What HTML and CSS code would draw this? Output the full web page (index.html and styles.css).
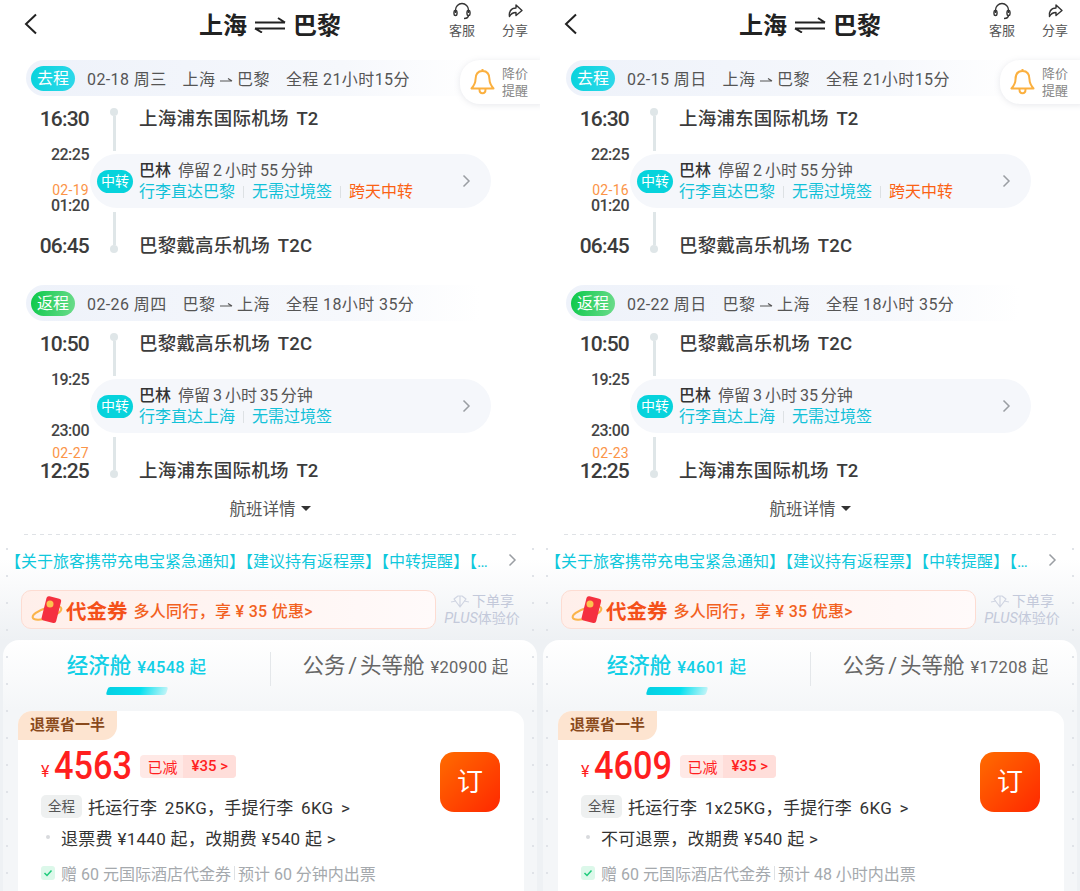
FILE: index.html
```html
<!DOCTYPE html>
<html lang="en">

<head>
    <title>上海 巴黎 机票</title>
    <link rel="stylesheet" href="styles.css">
</head>

<body>
<div class="page">

<!-- left phone -->
<section class="phone">
    <header class="topbar">
        <svg class="back" width="14" height="22" viewBox="0 0 14 22"><path d="M12 1.500 2 11l10 9.500" fill="none" stroke="#222" stroke-width="2"/></svg>
        <h1 class="title">上海
            <svg class="swap" width="32" height="16" viewBox="0 0 32 16"><path d="M1 5.500h30M31 5.500l-7-4.500M1 11.500h30M1 11.500l7 4" fill="none" stroke="#222" stroke-width="2"/></svg>
            巴黎</h1>
        <div class="actions">
            <div class="action">
                <svg width="20" height="20" viewBox="0 0 20 20"><path d="M3.500 11V8a6.500 6.500 0 0 1 13 0v3M16.500 13c0 2.500-2 3.500-4.500 3.500" fill="none" stroke="#333" stroke-width="1.400"/><rect x="2" y="8.500" width="3" height="5" rx="1.500" fill="none" stroke="#333" stroke-width="1.400"/><rect x="15" y="8.500" width="3" height="5" rx="1.500" fill="none" stroke="#333" stroke-width="1.400"/></svg>
                <span>客服</span>
            </div>
            <div class="action">
                <svg width="20" height="20" viewBox="0 0 20 20"><path d="M11 3l6 5.500-6 5v-3c-3 0-5 1-6.500 4-.8-4 1-8.500 6.500-8.500z" fill="none" stroke="#333" stroke-width="1.400" stroke-linejoin="round"/></svg>
                <span>分享</span>
            </div>
        </div>
    </header>

    <div class="alert">
        <svg width="27" height="28" viewBox="0 0 27 28"><path d="M13.500 3c-5 0-7 4-7 8.500 0 4-1.500 6-4 9h22c-2.500-3-4-5-4-9C20.500 7 18.500 3 13.500 3zM10.500 21.500c0 5 6 5 6 0M13.500 1v2" fill="none" stroke="#fbb03f" stroke-width="2" stroke-linejoin="round"/></svg>
        <span>降价<br>提醒</span>
    </div>

    <div class="leg">
        <div class="leg-bar">
            <span class="pill pill-out">去程</span>
            <span>02-18 周三</span>
            <span>上海 <svg class="mini-arrow" width="13" height="8" viewBox="0 0 13 8"><path d="M0 5h12M12 5L8 2.500" fill="none" stroke="#555" stroke-width="1.200"/></svg> 巴黎</span>
            <span>全程 21小时15分</span>
        </div>
        <div class="stop stop-start">
            <div class="time">16:30</div>
            <div class="rail"><i class="dot"></i><i class="line"></i></div>
            <div class="airport">上海浦东国际机场 T2</div>
        </div>
        <div class="transfer">
            <div class="transfer-times">
                <div>22:25</div>
                <div><div class="next-day">02-19</div>01:20</div>
            </div>
            <div class="transfer-box">
                <span class="transfer-tag">中转</span>
                <div class="transfer-info">
                    <div class="transfer-city"><b>巴林</b>停留 2 小时 55 分钟</div>
                    <div class="transfer-notes"><span>行李直达巴黎</span><i></i><span>无需过境签</span><i></i><span class="warn">跨天中转</span></div>
                </div>
                <svg class="chevron" width="9" height="14" viewBox="0 0 9 14"><path d="M1.500 1.500 7 7l-5.500 5.500" fill="none" stroke="#9a9ea3" stroke-width="1.500"/></svg>
            </div>
        </div>
        <div class="stop stop-end">
            <div class="time">06:45</div>
            <div class="rail"><i class="line"></i><i class="dot"></i></div>
            <div class="airport">巴黎戴高乐机场 T2C</div>
        </div>
    </div>

    <div class="leg">
        <div class="leg-bar">
            <span class="pill pill-back">返程</span>
            <span>02-26 周四</span>
            <span>巴黎 <svg class="mini-arrow" width="13" height="8" viewBox="0 0 13 8"><path d="M0 5h12M12 5L8 2.500" fill="none" stroke="#555" stroke-width="1.200"/></svg> 上海</span>
            <span>全程 18小时 35分</span>
        </div>
        <div class="stop stop-start">
            <div class="time">10:50</div>
            <div class="rail"><i class="dot"></i><i class="line"></i></div>
            <div class="airport">巴黎戴高乐机场 T2C</div>
        </div>
        <div class="transfer">
            <div class="transfer-times">
                <div>19:25</div>
                <div>23:00</div>
            </div>
            <div class="transfer-box">
                <span class="transfer-tag">中转</span>
                <div class="transfer-info">
                    <div class="transfer-city"><b>巴林</b>停留 3 小时 35 分钟</div>
                    <div class="transfer-notes"><span>行李直达上海</span><i></i><span>无需过境签</span></div>
                </div>
                <svg class="chevron" width="9" height="14" viewBox="0 0 9 14"><path d="M1.500 1.500 7 7l-5.500 5.500" fill="none" stroke="#9a9ea3" stroke-width="1.500"/></svg>
            </div>
        </div>
        <div class="stop stop-end">
            <div class="time"><div class="next-day">02-27</div>12:25</div>
            <div class="rail"><i class="line"></i><i class="dot"></i></div>
            <div class="airport">上海浦东国际机场 T2</div>
        </div>
    </div>

    <div class="details">航班详情<i class="caret"></i></div>

    <div class="lower">
        <div class="notice">
            <span class="notice-text">【关于旅客携带充电宝紧急通知】【建议持有返程票】【中转提醒】【…</span>
            <svg width="9" height="14" viewBox="0 0 9 14"><path d="M1.500 1.500 7 7l-5.500 5.500" fill="none" stroke="#9a9ea3" stroke-width="1.500"/></svg>
        </div>
        <div class="promo">
            <div class="voucher">
                <svg class="envelope" width="34" height="30" viewBox="0 0 34 30"><ellipse cx="16" cy="18" rx="15" ry="5" fill="none" stroke="#fbb44a" stroke-width="2" transform="rotate(-18 16 18)"/><rect x="13" y="2" width="15" height="25" rx="2.500" fill="#f5303f" transform="rotate(14 20 14)"/><circle cx="19" cy="9" r="3.500" fill="#fcc24f"/></svg>
                <strong>代金券</strong>
                <span>多人同行，享 ¥ 35 优惠&gt;</span>
            </div>
            <div class="plus">
                <div class="plus-top"><svg width="20" height="14" viewBox="0 0 20 14"><path d="M4 5l4-3h4l4 3-6 8zM1 8l5-1M19 8l-5-1M10 2v11" fill="none" stroke="#d0d5e2" stroke-width="1.200" stroke-linejoin="round"/></svg>下单享</div>
                <div><em>PLUS</em>体验价</div>
            </div>
        </div>

        <div class="cabin">
            <div class="tabs">
                <div class="tab tab-on"><span class="tab-name">经济舱</span><span class="tab-price">¥4548 起</span><i class="tab-bar"></i></div>
                <div class="tab"><span class="tab-name">公务 / 头等舱</span><span class="tab-price">¥20900 起</span></div>
            </div>
            <div class="fare">
                <div class="fare-tag">退票省一半</div>
                <div class="fare-body">
                    <div class="fare-main">
                        <div class="price-row">
                            <span class="yen">¥</span><span class="price">4563</span>
                            <span class="saved"><span>已减</span><b>¥35 &gt;</b></span>
                        </div>
                        <div class="fare-line"><span class="fare-chip">全程</span>托运行李 25KG，手提行李 6KG &gt;</div>
                        <div class="fare-line fare-refund"><i class="bullet"></i>退票费 ¥1440 起，改期费 ¥540 起 &gt;</div>
                    </div>
                    <div class="book">订</div>
                </div>
                <div class="fare-foot">
                    <svg width="14" height="14" viewBox="0 0 14 14"><rect width="14" height="14" rx="3" fill="#dcf8ea"/><path d="M3.500 7l2.500 2.500 4.500-5" fill="none" stroke="#1fca7c" stroke-width="1.500"/></svg>
                    <span>赠 60 元国际酒店代金券</span><i></i><span>预计 60 分钟内出票</span>
                </div>
            </div>
        </div>
    </div>
</section>

<!-- right phone -->
<section class="phone">
    <header class="topbar">
        <svg class="back" width="14" height="22" viewBox="0 0 14 22"><path d="M12 1.500 2 11l10 9.500" fill="none" stroke="#222" stroke-width="2"/></svg>
        <h1 class="title">上海
            <svg class="swap" width="32" height="16" viewBox="0 0 32 16"><path d="M1 5.500h30M31 5.500l-7-4.500M1 11.500h30M1 11.500l7 4" fill="none" stroke="#222" stroke-width="2"/></svg>
            巴黎</h1>
        <div class="actions">
            <div class="action">
                <svg width="20" height="20" viewBox="0 0 20 20"><path d="M3.500 11V8a6.500 6.500 0 0 1 13 0v3M16.500 13c0 2.500-2 3.500-4.500 3.500" fill="none" stroke="#333" stroke-width="1.400"/><rect x="2" y="8.500" width="3" height="5" rx="1.500" fill="none" stroke="#333" stroke-width="1.400"/><rect x="15" y="8.500" width="3" height="5" rx="1.500" fill="none" stroke="#333" stroke-width="1.400"/></svg>
                <span>客服</span>
            </div>
            <div class="action">
                <svg width="20" height="20" viewBox="0 0 20 20"><path d="M11 3l6 5.500-6 5v-3c-3 0-5 1-6.500 4-.8-4 1-8.500 6.500-8.500z" fill="none" stroke="#333" stroke-width="1.400" stroke-linejoin="round"/></svg>
                <span>分享</span>
            </div>
        </div>
    </header>

    <div class="alert">
        <svg width="27" height="28" viewBox="0 0 27 28"><path d="M13.500 3c-5 0-7 4-7 8.500 0 4-1.500 6-4 9h22c-2.500-3-4-5-4-9C20.500 7 18.500 3 13.500 3zM10.500 21.500c0 5 6 5 6 0M13.500 1v2" fill="none" stroke="#fbb03f" stroke-width="2" stroke-linejoin="round"/></svg>
        <span>降价<br>提醒</span>
    </div>

    <div class="leg">
        <div class="leg-bar">
            <span class="pill pill-out">去程</span>
            <span>02-15 周日</span>
            <span>上海 <svg class="mini-arrow" width="13" height="8" viewBox="0 0 13 8"><path d="M0 5h12M12 5L8 2.500" fill="none" stroke="#555" stroke-width="1.200"/></svg> 巴黎</span>
            <span>全程 21小时15分</span>
        </div>
        <div class="stop stop-start">
            <div class="time">16:30</div>
            <div class="rail"><i class="dot"></i><i class="line"></i></div>
            <div class="airport">上海浦东国际机场 T2</div>
        </div>
        <div class="transfer">
            <div class="transfer-times">
                <div>22:25</div>
                <div><div class="next-day">02-16</div>01:20</div>
            </div>
            <div class="transfer-box">
                <span class="transfer-tag">中转</span>
                <div class="transfer-info">
                    <div class="transfer-city"><b>巴林</b>停留 2 小时 55 分钟</div>
                    <div class="transfer-notes"><span>行李直达巴黎</span><i></i><span>无需过境签</span><i></i><span class="warn">跨天中转</span></div>
                </div>
                <svg class="chevron" width="9" height="14" viewBox="0 0 9 14"><path d="M1.500 1.500 7 7l-5.500 5.500" fill="none" stroke="#9a9ea3" stroke-width="1.500"/></svg>
            </div>
        </div>
        <div class="stop stop-end">
            <div class="time">06:45</div>
            <div class="rail"><i class="line"></i><i class="dot"></i></div>
            <div class="airport">巴黎戴高乐机场 T2C</div>
        </div>
    </div>

    <div class="leg">
        <div class="leg-bar">
            <span class="pill pill-back">返程</span>
            <span>02-22 周日</span>
            <span>巴黎 <svg class="mini-arrow" width="13" height="8" viewBox="0 0 13 8"><path d="M0 5h12M12 5L8 2.500" fill="none" stroke="#555" stroke-width="1.200"/></svg> 上海</span>
            <span>全程 18小时 35分</span>
        </div>
        <div class="stop stop-start">
            <div class="time">10:50</div>
            <div class="rail"><i class="dot"></i><i class="line"></i></div>
            <div class="airport">巴黎戴高乐机场 T2C</div>
        </div>
        <div class="transfer">
            <div class="transfer-times">
                <div>19:25</div>
                <div>23:00</div>
            </div>
            <div class="transfer-box">
                <span class="transfer-tag">中转</span>
                <div class="transfer-info">
                    <div class="transfer-city"><b>巴林</b>停留 3 小时 35 分钟</div>
                    <div class="transfer-notes"><span>行李直达上海</span><i></i><span>无需过境签</span></div>
                </div>
                <svg class="chevron" width="9" height="14" viewBox="0 0 9 14"><path d="M1.500 1.500 7 7l-5.500 5.500" fill="none" stroke="#9a9ea3" stroke-width="1.500"/></svg>
            </div>
        </div>
        <div class="stop stop-end">
            <div class="time"><div class="next-day">02-23</div>12:25</div>
            <div class="rail"><i class="line"></i><i class="dot"></i></div>
            <div class="airport">上海浦东国际机场 T2</div>
        </div>
    </div>

    <div class="details">航班详情<i class="caret"></i></div>

    <div class="lower">
        <div class="notice">
            <span class="notice-text">【关于旅客携带充电宝紧急通知】【建议持有返程票】【中转提醒】【…</span>
            <svg width="9" height="14" viewBox="0 0 9 14"><path d="M1.500 1.500 7 7l-5.500 5.500" fill="none" stroke="#9a9ea3" stroke-width="1.500"/></svg>
        </div>
        <div class="promo">
            <div class="voucher">
                <svg class="envelope" width="34" height="30" viewBox="0 0 34 30"><ellipse cx="16" cy="18" rx="15" ry="5" fill="none" stroke="#fbb44a" stroke-width="2" transform="rotate(-18 16 18)"/><rect x="13" y="2" width="15" height="25" rx="2.500" fill="#f5303f" transform="rotate(14 20 14)"/><circle cx="19" cy="9" r="3.500" fill="#fcc24f"/></svg>
                <strong>代金券</strong>
                <span>多人同行，享 ¥ 35 优惠&gt;</span>
            </div>
            <div class="plus">
                <div class="plus-top"><svg width="20" height="14" viewBox="0 0 20 14"><path d="M4 5l4-3h4l4 3-6 8zM1 8l5-1M19 8l-5-1M10 2v11" fill="none" stroke="#d0d5e2" stroke-width="1.200" stroke-linejoin="round"/></svg>下单享</div>
                <div><em>PLUS</em>体验价</div>
            </div>
        </div>

        <div class="cabin">
            <div class="tabs">
                <div class="tab tab-on"><span class="tab-name">经济舱</span><span class="tab-price">¥4601 起</span><i class="tab-bar"></i></div>
                <div class="tab"><span class="tab-name">公务 / 头等舱</span><span class="tab-price">¥17208 起</span></div>
            </div>
            <div class="fare">
                <div class="fare-tag">退票省一半</div>
                <div class="fare-body">
                    <div class="fare-main">
                        <div class="price-row">
                            <span class="yen">¥</span><span class="price">4609</span>
                            <span class="saved"><span>已减</span><b>¥35 &gt;</b></span>
                        </div>
                        <div class="fare-line"><span class="fare-chip">全程</span>托运行李 1x25KG，手提行李 6KG &gt;</div>
                        <div class="fare-line fare-refund"><i class="bullet"></i>不可退票，改期费 ¥540 起 &gt;</div>
                    </div>
                    <div class="book">订</div>
                </div>
                <div class="fare-foot">
                    <svg width="14" height="14" viewBox="0 0 14 14"><rect width="14" height="14" rx="3" fill="#dcf8ea"/><path d="M3.500 7l2.500 2.500 4.500-5" fill="none" stroke="#1fca7c" stroke-width="1.500"/></svg>
                    <span>赠 60 元国际酒店代金券</span><i></i><span>预计 48 小时内出票</span>
                </div>
            </div>
        </div>
    </div>
</section>

</div>
</body>

</html>
```

FILE: styles.css
```css
* {
    box-sizing: border-box;
}

html,
body {
    margin: 0;
    height: 891px;
    overflow: hidden;
    background: #fff;
}

body {
    font-family: "Roboto", "Noto Sans CJK SC", sans-serif;
    color: #333;
}

i {
    font-style: normal;
}

.page {
    display: flex;
}

.phone {
    position: relative;
    width: 540px;
    height: 891px;
    overflow: hidden;
    background: #fff;
}

/* faint ticks down both edges of the lower part */
.phone::after {
    content: "";
    position: absolute;
    inset: 548px 0 0 0;
    pointer-events: none;
    background:
        repeating-linear-gradient(180deg, #e0e3e8 0 2px, transparent 2px 27px) left 6px top / 2px 100% no-repeat,
        repeating-linear-gradient(180deg, #e0e3e8 0 2px, transparent 2px 27px) right 6px top / 2px 100% no-repeat;
}

/* top bar */
.topbar {
    position: relative;
    display: flex;
    align-items: center;
    justify-content: center;
    height: 60px;
    padding-bottom: 14px;
}

.back {
    position: absolute;
    left: 24px;
    top: 13px;
}

.title {
    display: flex;
    align-items: center;
    gap: 7px;
    margin: 0;
    font-size: 24px;
    font-weight: 700;
    color: #222;
}

.swap {
    margin-top: 4px;
}

.actions {
    position: absolute;
    right: 12px;
    top: 2px;
    display: flex;
    gap: 27px;
}

.action {
    display: flex;
    flex-direction: column;
    align-items: center;
    font-size: 13px;
    line-height: 18px;
    color: #555;
}

/* price alert */
.alert {
    position: absolute;
    left: 460px;
    top: 60px;
    display: flex;
    align-items: center;
    gap: 6px;
    width: 84px;
    height: 44px;
    padding-left: 9px;
    border-radius: 20px 0 0 20px;
    background: #fff;
    box-shadow: 0 1px 6px rgba(120, 130, 150, .18);
    font-size: 13px;
    line-height: 17px;
    color: #888;
}

/* legs */
.leg {
    margin-bottom: 25px;
}

.leg-bar {
    display: flex;
    align-items: center;
    gap: 16px;
    width: 454px;
    height: 36px;
    margin: 0 0 9px 26px;
    padding-left: 5px;
    border-radius: 18px 0 0 18px;
    background: linear-gradient(90deg, #eef2fa, #f6f8fc 70%, #fff);
    font-size: 16px;
    letter-spacing: .4px;
    color: #555;
}

.pill {
    width: 44px;
    height: 25px;
    margin-right: -4px;
    border-radius: 13px;
    font-size: 16px;
    letter-spacing: 0;
    line-height: 25px;
    text-align: center;
    color: #fff;
}

.pill-out {
    background: linear-gradient(100deg, #07d3dc, #2fd8ea);
}

.pill-back {
    background: linear-gradient(100deg, #0cc94a, #6ddc8c);
}

.mini-arrow {
    vertical-align: 1px;
}

.stop {
    display: flex;
}

.stop-start {
    height: 40px;
}

.stop-end {
    height: 45px;
}

.time {
    display: flex;
    flex-direction: column;
    justify-content: flex-end;
    align-items: flex-end;
    width: 89px;
    height: 28px;
    font-size: 21px;
    font-weight: 500;
    letter-spacing: -.8px;
    line-height: 28px;
    color: #3c3c3c;
}

.stop-end .time {
    height: 45px;
}

.stop-end .next-day {
    margin-bottom: -3px;
    letter-spacing: .3px;
}

.rail {
    display: flex;
    flex-direction: column;
    align-items: center;
    width: 50px;
    height: 46px;
    padding-top: 3px;
}

.stop-end .rail {
    height: 41px;
    margin-top: -3px;
    padding-top: 0;
}

.dot {
    flex: none;
    width: 8px;
    height: 8px;
    border-radius: 50%;
    background: #dfe6e8;
}

.line {
    flex: 1;
    width: 3px;
    background: #dfe6e8;
}

.airport {
    height: 28px;
    font-size: 18.500px;
    font-weight: 500;
    letter-spacing: .2px;
    word-spacing: 3px;
    line-height: 28px;
    color: #3c3c3c;
}

.stop-end .airport {
    margin-top: 17px;
}

.transfer {
    display: flex;
    height: 70px;
}

.transfer-times {
    display: flex;
    flex-direction: column;
    justify-content: space-between;
    width: 89px;
    padding-top: 1px;
    font-size: 16px;
    font-weight: 500;
    letter-spacing: -.5px;
    line-height: 18px;
    text-align: right;
    color: #444;
}

.next-day {
    font-size: 14px;
    font-weight: 400;
    letter-spacing: .3px;
    line-height: 14px;
    color: #fb9447;
}

.transfer-box {
    display: flex;
    align-items: center;
    width: 401px;
    height: 54px;
    margin: 9px 0 0 1px;
    padding: 0 20px 0 7px;
    border-radius: 27px;
    background: #f5f7fb;
}

.transfer-tag {
    width: 36px;
    height: 23px;
    border-radius: 12px;
    background: #07d3dc;
    font-size: 14px;
    line-height: 23px;
    text-align: center;
    color: #fff;
}

.transfer-info {
    flex: 1;
    margin-left: 6px;
}

.transfer-city {
    font-size: 16px;
    word-spacing: -1px;
    line-height: 22px;
    color: #555;
}

.transfer-city b {
    margin-right: 7px;
    font-weight: 500;
    color: #333;
}

.transfer-notes {
    display: flex;
    align-items: center;
    gap: 8px;
    font-size: 16px;
    line-height: 20px;
    color: #12c1d8;
}

.transfer-notes i {
    width: 1px;
    height: 12px;
    background: #dde1e4;
}

.warn {
    color: #fb6214;
}

.details {
    display: flex;
    align-items: center;
    justify-content: center;
    height: 20px;
    margin-top: -12px;
    font-size: 16.500px;
    color: #555;
}

.caret {
    width: 0;
    height: 0;
    margin-left: 5px;
    border: 5px solid transparent;
    border-top: 5px solid #333;
    border-bottom: 0;
}

/* lower part */
.lower {
    height: 360px;
    margin-top: 16px;
    background: linear-gradient(180deg, #fff 25px, #eef1f4 106px);
}

.lower::before {
    content: "";
    display: block;
    height: 1px;
    margin: 0 24px;
    background: repeating-linear-gradient(90deg, #dfe2e6 0 4px, transparent 4px 8px);
}

.notice {
    display: flex;
    align-items: center;
    justify-content: space-between;
    height: 20px;
    margin-top: 15px;
    padding: 0 23px 0 5px;
    font-size: 16px;
    color: #10c8dc;
}

.promo {
    display: flex;
    align-items: center;
    margin: 20px 0 0 21px;
}

.voucher {
    display: flex;
    align-items: center;
    width: 415px;
    height: 39px;
    padding-left: 9px;
    border: 1px solid #fddcd2;
    border-radius: 10px;
    background: linear-gradient(90deg, #ffefea, #fffafa);
    font-size: 16px;
    font-weight: 500;
    letter-spacing: .3px;
    color: #f2611f;
}

.voucher strong {
    margin: 0 6px 0 1px;
    font-size: 20.500px;
    font-weight: 700;
    letter-spacing: 0;
    color: #f4501a;
}

.plus {
    width: 78px;
    margin-left: 7px;
    font-size: 14px;
    line-height: 17px;
    text-align: center;
    color: #c3c9da;
}

.plus-top svg {
    margin-right: 2px;
    vertical-align: -2px;
}

.plus em {
    font-size: 14.500px;
}

.cabin {
    width: 534px;
    height: 260px;
    margin: 11px 0 0 3px;
    border-radius: 16px 16px 0 0;
    background: linear-gradient(180deg, #fff, #f4f6f8 70px);
}

.tabs {
    display: flex;
    height: 71px;
}

.tab {
    position: relative;
    display: flex;
    align-items: baseline;
    justify-content: center;
    gap: 6px;
    width: 267px;
    padding-top: 8px;
    color: #666;
}

.tab + .tab {
    padding-left: 4px;
}

.tab + .tab::before {
    content: "";
    position: absolute;
    left: 0;
    top: 12px;
    width: 1px;
    height: 34px;
    background: #e4e7ea;
}

.tab-name {
    font-size: 21.500px;
    word-spacing: -2.500px;
}

.tab-price {
    font-size: 16.500px;
    letter-spacing: .3px;
}

.tab-on {
    color: #12cfe6;
}

.tab-on .tab-name,
.tab-on .tab-price {
    font-weight: 500;
}

.tab-bar {
    position: absolute;
    left: 104px;
    top: 47px;
    width: 60px;
    height: 8px;
    border-radius: 2px;
    background: linear-gradient(90deg, #05cfe2, #05e0ef 55%, #c0f4f7);
    transform: skewX(-18deg);
}

.fare {
    width: 506px;
    height: 190px;
    margin-left: 15px;
    border-radius: 14px 14px 0 0;
    background: #fff;
}

.fare-tag {
    width: 99px;
    height: 29px;
    border-radius: 14px 0 14px 0;
    background: #fde4d0;
    font-size: 15px;
    font-weight: 700;
    line-height: 29px;
    text-align: center;
    color: #8a4a1c;
}

.fare-body {
    display: flex;
    justify-content: space-between;
    padding: 0 24px 0 23px;
}

.fare-main {
    padding-top: 5px;
}

.price-row {
    display: flex;
    align-items: center;
    height: 42px;
    color: #ff1f1f;
}

.yen {
    margin: 10px 5px 0 0;
    font-size: 16px;
}

/* digits in the picture are narrow and tall */
.price {
    width: 77px;
    font-size: 39px;
    font-weight: 500;
    transform: scaleX(.88);
    transform-origin: left center;
}

.saved {
    display: flex;
    align-items: center;
    height: 23px;
    margin-left: 9px;
    border-radius: 4px;
    background: #ffe9e6;
    font-size: 15px;
}

.saved span {
    padding: 0 6px 0 7px;
}

.saved b {
    padding: 0 8px;
    border-radius: 0 4px 4px 0;
    background: #ffdeda;
    font-weight: 500;
    line-height: 23px;
}

.fare-line {
    display: flex;
    align-items: center;
    height: 28px;
    margin-top: 3px;
    font-size: 17px;
    letter-spacing: .3px;
    white-space: pre;
    color: #333;
}

.price-row + .fare-line {
    margin-top: 5px;
    word-spacing: 3px;
}

.fare-chip {
    width: 41px;
    height: 23px;
    margin-right: 6px;
    border-radius: 5px;
    background: #eef0f0;
    font-size: 13.500px;
    letter-spacing: 0;
    line-height: 23px;
    text-align: center;
    color: #555;
}

.bullet {
    width: 4px;
    height: 4px;
    margin: 0 11px 0 5px;
    border-radius: 50%;
    background: #d8dadd;
}

.book {
    width: 60px;
    height: 60px;
    margin-top: 12px;
    border-radius: 14px;
    background: linear-gradient(135deg, #ff6c00, #ff2800);
    font-size: 26px;
    line-height: 60px;
    text-align: center;
    color: #fff;
}

.fare-foot {
    display: flex;
    align-items: center;
    gap: 3px;
    margin: 10px 0 0 23px;
    font-size: 16px;
    color: #a5a9ad;
}

.fare-foot svg {
    margin-right: 3px;
}

.fare-foot i {
    width: 1px;
    height: 14px;
    background: #dfe2e5;
}
```
